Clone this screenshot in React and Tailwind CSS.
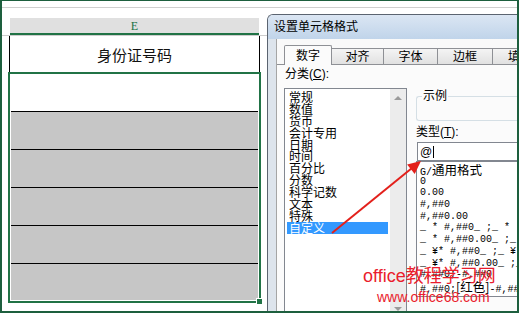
import React from 'react';

const categories = [
  '常规', '数值', '货币', '会计专用', '日期', '时间',
  '百分比', '分数', '科学记数', '文本', '特殊', '自定义'
];

// Formats in the "类型" list; CJK parts are wider in the dialog font
const formats = [
  ['G/', '通用格式'],
  ['0'],
  ['0.00'],
  ['#,##0'],
  ['#,##0.00'],
  ['_ * #,##0_ ;_ * -#,##0_ ;_ * "-"_ ;_ @_ '],
  ['_ * #,##0.00_ ;_ * -#,##0.00_ ;_ * "-"??_ ;_ @_ '],
  ['_ ¥* #,##0_ ;_ ¥* -#,##0_ ;_ ¥* "-"_ ;_ @_ '],
  ['_ ¥* #,##0.00_ ;_ ¥* -#,##0.00_ ;_ ¥* "-"??_ ;_ @_ '],
  ['#,##0;-#,##0'],
  ['#,##0;', '红色', '-#,##0']
];

const tabs = ['对齐', '字体', '边框', '填充'];

function Sheet() {
  return (
    <div className="w-[265px] shrink-0">
      {/* column header E */}
      <div className="h-[28px] pt-[10px] border-b border-[#cdcdcd]">
        <div className="ml-[8px] w-[249px] h-[17px] bg-[#e0e0e0] border-b-2 border-[#217346] flex items-center justify-center">
          <span className="font-['Liberation_Serif',serif] text-[12px] leading-none text-[#217346]">E</span>
        </div>
      </div>

      {/* header cell */}
      <div className="ml-[7px] w-[251px] h-[36px] bg-white border-x border-black flex items-center justify-center">
        <span className="text-[15px] text-[#111] font-['Noto_Sans_CJK_SC',sans-serif] leading-none">身份证号码</span>
      </div>

      {/* selected range */}
      <div className="relative ml-[6px] w-[253px] border-2 border-[#217346] p-px bg-white">
        <div className="h-[36px] bg-white" />
        <div className="h-[38px] border-t border-black bg-[#c6c6c6]" />
        <div className="h-[38px] border-t border-black bg-[#c6c6c6]" />
        <div className="h-[38px] border-t border-black bg-[#c6c6c6]" />
        <div className="h-[38px] border-t border-black bg-[#c6c6c6]" />
        <div className="h-[37px] border-t border-black bg-[#c6c6c6]" />
        <div className="absolute -right-[4px] -bottom-[4px] w-[7px] h-[7px] bg-[#217346] border border-white" />
      </div>
    </div>
  );
}

function Dialog() {
  return (
    <div className="flex-1 mt-[6px] flex flex-col border-l border-t border-[#5b6470] rounded-tl-[6px] bg-[#dde4ec] overflow-hidden">
      {/* title bar */}
      <div className="h-[24px] shrink-0 bg-gradient-to-b from-[#dbe6f3] to-[#c0d4ea] flex items-center pl-[6px]">
        <span className="text-[12px] leading-none text-black">设置单元格格式</span>
      </div>

      <div className="flex-1 pl-[8px] flex">
        <div className="flex-1 border-l border-[#a5a5a5] bg-[#f9f9f9] pt-[6px] flex flex-col">
          {/* tabs */}
          <div className="relative z-10 ml-[7px] h-[20px] flex items-end">
            <div className="h-[20px] w-[48px] bg-[#fbfbfb] border border-b-0 border-[#8e9095] rounded-t-[2px] flex items-center justify-center text-[12px]">
              数字
            </div>
            {tabs.map((t, i) => (
              <div
                key={t}
                className={`h-[17px] shrink-0 bg-gradient-to-b from-[#f4f4f4] to-[#e1e1e1] border-t border-r border-b border-[#8e9095] flex items-center justify-center text-[12px] ${i === 0 ? 'w-[52px]' : i === 1 ? 'w-[54px]' : 'w-[55px]'}`}
              >
                {t}
              </div>
            ))}
          </div>

          {/* tab page */}
          <div className="-mt-px flex-1 border-t border-[#8e9095] bg-[#fbfbfb] flex">
            <div className="ml-[7px] w-[123px] shrink-0">
              <div className="h-[19px] leading-[19px] text-[12px] pl-px">
                分类(<span className="underline">C</span>):
              </div>
              <div className="mt-[4px] h-[230px] border border-[#828790] bg-white flex">
                <div className="flex-1 pt-[2px] px-[2px] font-['Noto_Sans_CJK_SC',sans-serif] text-[12px] leading-[11.9px]">
                  {categories.map((c) => (
                    <div
                      key={c}
                      className={`h-[11.9px] px-[2px] whitespace-nowrap ${c === '自定义' ? 'bg-[#3399ff] text-white' : 'text-black'}`}
                    >
                      {c}
                    </div>
                  ))}
                </div>
                <div className="w-[16px] bg-[#ececec] flex flex-col justify-between">
                  <div className="h-[17px] flex items-center justify-center">
                    <div className="w-0 h-0 border-x-[4px] border-x-transparent border-b-[4px] border-b-[#9a9a9a]" />
                  </div>
                  <div className="h-[17px] flex items-center justify-center">
                    <div className="w-0 h-0 border-x-[4px] border-x-transparent border-t-[4px] border-t-[#9a9a9a]" />
                  </div>
                </div>
              </div>
            </div>

            <div className="ml-[9px] flex-1 min-w-0 overflow-hidden">
              {/* sample group box */}
              <div className="relative mt-[31px] h-[25px] border border-r-0 border-[#d5dfe5] rounded-l-[3px]">
                <span className="absolute -top-[8px] left-[5px] px-px bg-[#fbfbfb] text-[12px] leading-[14px]">示例</span>
              </div>

              <div className="mt-[5px] h-[12px] leading-[12px] text-[12px] whitespace-nowrap">
                类型(<span className="underline">T</span>):
              </div>

              <div className="mt-[4px] ml-px h-[19px] border border-[#828790] bg-white flex items-center pl-[2px]">
                <span className="text-[12px] leading-none">@</span>
                <span className="ml-px w-px h-[12px] bg-black" />
              </div>

              <div className="h-[136px] border border-[#828790] bg-white pt-[2px] pl-[3px] font-['Liberation_Mono','Noto_Sans_CJK_SC',monospace] text-[10px] leading-[11.7px] text-black overflow-hidden">
                {formats.map((f, i) => (
                  <div key={i} className="h-[11.7px] whitespace-nowrap">
                    {f.map((part, j) =>
                      /[\u4e00-\u9fa5]/.test(part) ? (
                        <span key={j} className="font-['Noto_Sans_CJK_SC',sans-serif] text-[12.5px]">{j === 1 && f.length === 3 ? `[${part}]` : part}</span>
                      ) : (
                        <span key={j}>{part}</span>
                      )
                    )}
                  </div>
                ))}
              </div>
            </div>
          </div>
        </div>
      </div>
    </div>
  );
}

export default function App() {
  return (
    <div className="relative w-[519px] h-[313px] overflow-hidden bg-white border-t border-x-2 border-b-2 border-[#1d5f3e] flex flex-col font-['Liberation_Sans','Noto_Sans_CJK_SC',sans-serif] text-black">
      <div className="h-[7px] shrink-0 border-b border-[#cfcfcf]" />
      <div className="flex-1 flex min-h-0">
        <Sheet />
        <Dialog />
      </div>

      {/* red arrow */}
      <svg
        className="absolute -left-[2px] -top-px pointer-events-none"
        width="519"
        height="313"
        viewBox="0 0 519 313"
      >
        <line x1="332" y1="233" x2="412" y2="168" stroke="#e3201b" strokeWidth="2" />
        <polygon points="421,161 414.7,173.9 407.1,164.5" fill="#e3201b" />
      </svg>

      {/* watermark */}
      <div className="absolute left-[361px] top-[266px] text-[18px] leading-[18px] text-[#ea1c2c] whitespace-nowrap pointer-events-none">
        office教程学习网
      </div>
      <div className="absolute left-[375px] top-[289px] text-[14px] leading-[14px] text-[#ea1c2c] whitespace-nowrap pointer-events-none">
        www.office68.com
      </div>
    </div>
  );
}
